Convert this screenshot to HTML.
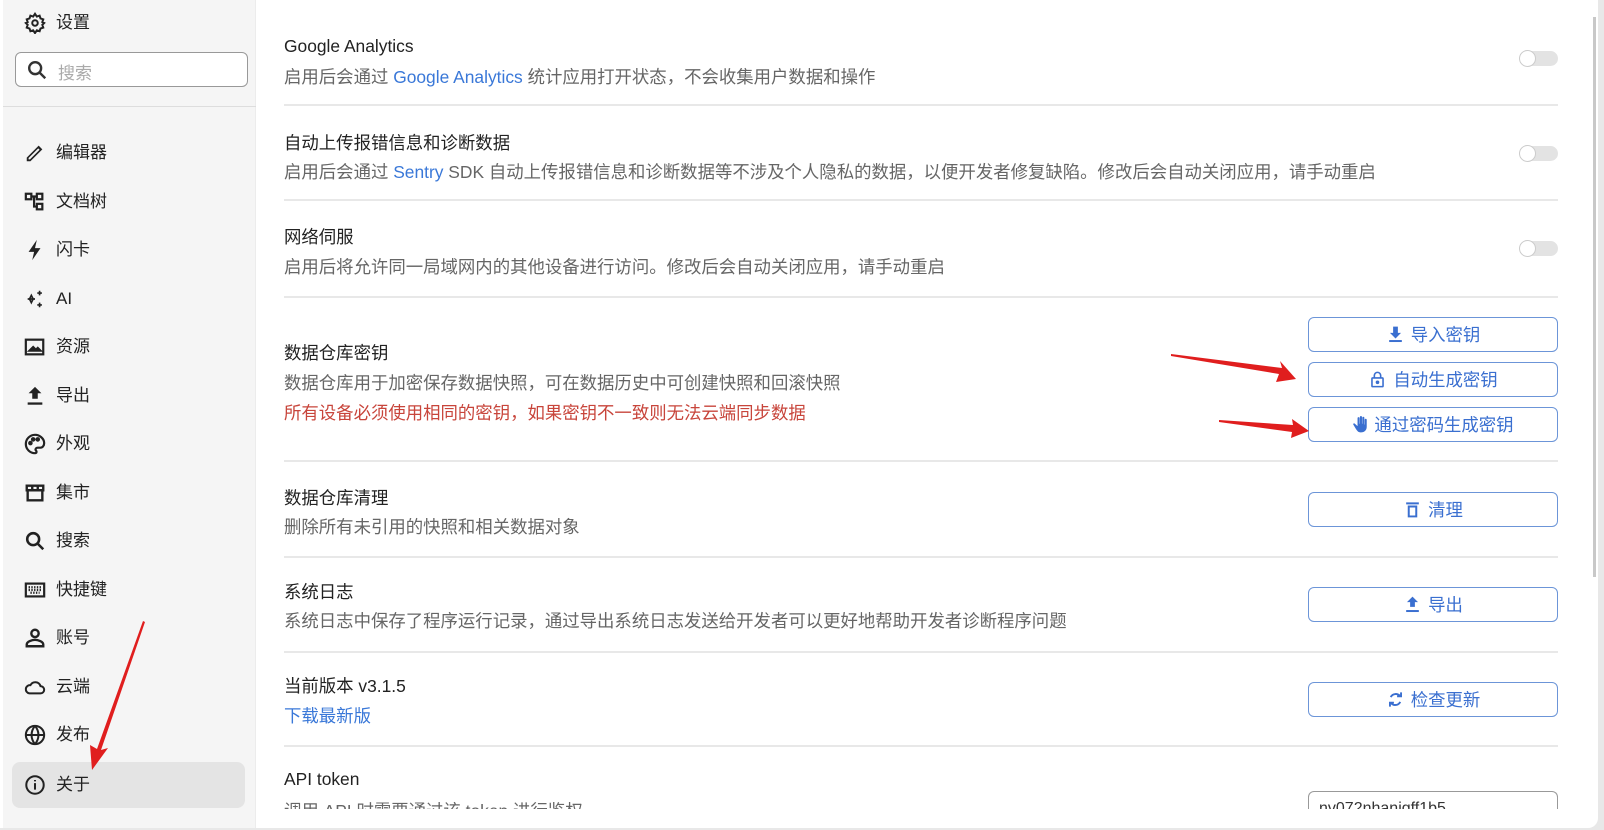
<!DOCTYPE html>
<html><head><meta charset="utf-8"><style>
*{box-sizing:border-box;margin:0;padding:0}
body{width:1604px;height:830px;background:#e8e8e8;font-family:"Liberation Sans","Noto Sans CJK SC",sans-serif;position:relative;overflow:hidden}
.win{position:absolute;left:0;top:0;width:1598px;height:828px;background:#fff;border-radius:0 0 10px 0;overflow:hidden}
.side{position:absolute;left:3px;top:0;width:253px;height:828px;background:#f5f5f5;border-right:1px solid #ececec}
.it{position:absolute;left:20px;font-size:17px;color:#222;height:24px;line-height:24px}
.it svg{position:absolute;left:1px;top:1px;width:22px;height:22px}
.it span{position:absolute;left:33px;white-space:nowrap}
.search{position:absolute;left:12px;top:52px;width:233px;height:35px;border:1px solid #999;border-radius:6px;background:#fff}
.t{position:absolute;left:284px;font-size:17.4px;color:#222;white-space:nowrap}
.d{position:absolute;left:284px;font-size:17.4px;color:#666;white-space:nowrap}
.sep{position:absolute;left:284px;width:1274px;height:2px;background:#e8e8e8}
.tg{position:absolute;left:1519px;width:40px;height:17px}
.tg .tr{position:absolute;left:6px;top:1px;width:33px;height:15px;border-radius:8px;background:#e3e3e3}
.tg .kn{position:absolute;left:0;top:0;width:17px;height:17px;border-radius:50%;background:#fff;border:1px solid #ccc}
.btn{position:absolute;left:1308px;width:250px;height:35px;border:1px solid #6c95d8;border-radius:6px;color:#3a6fd0;font-size:17.4px;display:flex;align-items:center;justify-content:center;gap:6px;background:#fff}
.btn svg{width:19px;height:19px}
a{color:#3a78d8;text-decoration:none}
</style></head><body>
<div class="win">
<div class="side">
<div class="it" style="top:11px"><svg viewBox="0 0 24 24" fill="none" stroke="#222" stroke-width="2.2"><circle cx="12" cy="12" r="3"/><path d="M12 2l2 3 3-1 1 3 3 1-1 3 2 1-2 2 1 3-3 1-1 3-3-1-2 3-2-3-3 1-1-3-3-1 1-3-2-2 2-1-1-3 3-1 1-3 3 1z"/></svg><span>设置</span></div>
<div class="search"><svg style="position:absolute;left:10px;top:6px" width="22" height="22" viewBox="0 0 24 24" fill="none" stroke="#333" stroke-width="2.6"><circle cx="10" cy="10" r="6.5"/><path d="M15 15l6 6"/></svg><span style="position:absolute;left:42px;top:6px;font-size:17px;color:#aaa">搜索</span></div>
<div style="position:absolute;left:0;top:106px;width:253px;height:1px;background:#ddd"></div>
<div class="it" style="top:141px"><svg viewBox="0 0 24 24" fill="#222"><path d="M3 21v-4L16 4l4 4L7 21zM5 19h1.5L17 8.5 15.5 7 5 17.5z"/></svg><span>编辑器</span></div>
<div class="it" style="top:190px"><svg viewBox="0 0 24 24" fill="none" stroke="#222" stroke-width="2.4"><rect x="2" y="3" width="6" height="6"/><rect x="14" y="3" width="6" height="6"/><rect x="14" y="14" width="6" height="6"/><path d="M8 6h6M11 6v11h3"/></svg><span>文档树</span></div>
<div class="it" style="top:238px"><svg viewBox="0 0 24 24" fill="#222"><path d="M14 1L5 14h6l-2 9 9-13h-6z"/></svg><span>闪卡</span></div>
<div class="it" style="top:287px"><svg viewBox="0 0 24 24" fill="none" stroke="#222" stroke-width="1.8"><path d="M8 8l2 4-2 4-2-4zM4 12h8"/><path d="M17 3v5M14.5 5.5h5M17 16v5M14.5 18.5h5" /></svg><span>AI</span></div>
<div class="it" style="top:335px"><svg viewBox="0 0 24 24" fill="none" stroke="#222" stroke-width="2.4"><rect x="2" y="4" width="19" height="16"/><path d="M6 16l4-4 3 3 2-2 3 3z" fill="#222"/></svg><span>资源</span></div>
<div class="it" style="top:384px"><svg viewBox="0 0 24 24" fill="#222"><path d="M12 2l7 7h-4v6H9V9H5z"/><rect x="4" y="19" width="16" height="2.5"/></svg><span>导出</span></div>
<div class="it" style="top:432px"><svg viewBox="0 0 24 24" fill="none" stroke="#222" stroke-width="2.4"><path d="M12 2a10 10 0 100 20c2 0 2-2 1-3s0-3 2-3h3c2 0 4-2 4-5C22 6 17 2 12 2z"/><circle cx="7" cy="11" r="1.3" fill="#222"/><circle cx="10" cy="7" r="1.3" fill="#222"/><circle cx="15" cy="7" r="1.3" fill="#222"/></svg><span>外观</span></div>
<div class="it" style="top:481px"><svg viewBox="0 0 24 24" fill="none" stroke="#222" stroke-width="2.6"><path d="M3 4h18v5H3zM4 9v11h16V9M9 4v5M15 4v5"/></svg><span>集市</span></div>
<div class="it" style="top:529px"><svg viewBox="0 0 24 24" fill="none" stroke="#222" stroke-width="2.8"><circle cx="10" cy="10" r="6.5"/><path d="M15 15l6 6"/></svg><span>搜索</span></div>
<div class="it" style="top:578px"><svg viewBox="0 0 24 24" fill="none" stroke="#222" stroke-width="2.4"><rect x="2" y="5" width="20" height="14"/><path d="M5 9h14M5 12h14M7 15h10" stroke-dasharray="1.5 1.5"/></svg><span>快捷键</span></div>
<div class="it" style="top:626px"><svg viewBox="0 0 24 24" fill="none" stroke="#222" stroke-width="2.6"><circle cx="12" cy="7" r="4"/><path d="M3 21v-2c0-3 6-5 9-5s9 2 9 5v2z"/></svg><span>账号</span></div>
<div class="it" style="top:675px"><svg viewBox="0 0 24 24" fill="none" stroke="#222" stroke-width="2.2"><path d="M6 19h12a4 4 0 000-8 6 6 0 00-11-1 4.5 4.5 0 00-1 9z"/></svg><span>云端</span></div>
<div class="it" style="top:723px"><svg viewBox="0 0 24 24" fill="none" stroke="#222" stroke-width="2.2"><circle cx="12" cy="12" r="10"/><path d="M2 12h20M12 2c-5 6-5 14 0 20M12 2c5 6 5 14 0 20"/></svg><span>发布</span></div>
<div style="position:absolute;left:9px;top:762px;width:233px;height:46px;background:#e4e4e4;border-radius:8px"></div>
<div class="it" style="top:773px"><svg viewBox="0 0 24 24" fill="none" stroke="#222" stroke-width="2.2"><circle cx="12" cy="12" r="9.5"/><path d="M12 10v7M12 6.5v1.5"/></svg><span>关于</span></div>
</div>

<div class="t" style="top:36px">Google Analytics</div>
<div class="d" style="top:64px">启用后会通过 <a>Google Analytics</a> 统计应用打开状态，不会收集用户数据和操作</div>
<div class="tg" style="top:50px"><div class="tr"></div><div class="kn"></div></div>
<div class="sep" style="top:104px"></div>

<div class="t" style="top:130px">自动上传报错信息和诊断数据</div>
<div class="d" style="top:159px">启用后会通过 <a>Sentry</a> SDK 自动上传报错信息和诊断数据等不涉及个人隐私的数据，以便开发者修复缺陷。修改后会自动关闭应用，请手动重启</div>
<div class="tg" style="top:145px"><div class="tr"></div><div class="kn"></div></div>
<div class="sep" style="top:199px"></div>

<div class="t" style="top:224px">网络伺服</div>
<div class="d" style="top:254px">启用后将允许同一局域网内的其他设备进行访问。修改后会自动关闭应用，请手动重启</div>
<div class="tg" style="top:240px"><div class="tr"></div><div class="kn"></div></div>
<div class="sep" style="top:296px"></div>

<div class="t" style="top:340px">数据仓库密钥</div>
<div class="d" style="top:370px">数据仓库用于加密保存数据快照，可在数据历史中可创建快照和回滚快照</div>
<div class="d" style="top:400px;color:#c8453b">所有设备必须使用相同的密钥，如果密钥不一致则无法云端同步数据</div>
<div class="btn" style="top:317px"><svg viewBox="0 0 24 24" fill="#3a6fd0"><path d="M9 2h6v8h4l-7 7-7-7h4z"/><rect x="4" y="19" width="16" height="2.5"/></svg>导入密钥</div>
<div class="btn" style="top:362px"><svg viewBox="0 0 24 24" fill="none" stroke="#3a6fd0" stroke-width="2"><rect x="5" y="10" width="14" height="11" rx="1"/><path d="M8 10V7a4 4 0 018 0v3"/><circle cx="12" cy="15.5" r="1.3" fill="#3a6fd0"/></svg>自动生成密钥</div>
<div class="btn" style="top:407px;gap:3px"><svg viewBox="0 0 24 24" fill="#3a6fd0"><path d="M7 4a1.3 1.3 0 012.6 0v7h.4V2.5a1.3 1.3 0 012.6 0V11h.4V3.5a1.3 1.3 0 012.6 0V12h.4V6a1.3 1.3 0 012.6 0v9c0 4-3 7-7 7s-5-2-7-5l-3-5c-.6-1 .8-2 1.7-1.2L7 14z"/></svg>通过密码生成密钥</div>
<div class="sep" style="top:460px"></div>

<div class="t" style="top:485px">数据仓库清理</div>
<div class="d" style="top:514px">删除所有未引用的快照和相关数据对象</div>
<div class="btn" style="top:492px"><svg viewBox="0 0 24 24" fill="#3a6fd0"><path d="M4 3h16v2.5H4zM6 7h12v15H6zm2.5 2.5v10h7v-10z"/></svg>清理</div>
<div class="sep" style="top:556px"></div>

<div class="t" style="top:579px">系统日志</div>
<div class="d" style="top:608px">系统日志中保存了程序运行记录，通过导出系统日志发送给开发者可以更好地帮助开发者诊断程序问题</div>
<div class="btn" style="top:587px"><svg viewBox="0 0 24 24" fill="#3a6fd0"><path d="M12 2l7 7h-4v6H9V9H5z"/><rect x="4" y="19" width="16" height="2.5"/></svg>导出</div>
<div class="sep" style="top:651px"></div>

<div class="t" style="top:673px">当前版本 v3.1.5</div>
<div class="d" style="top:703px"><a>下载最新版</a></div>
<div class="btn" style="top:682px"><svg viewBox="0 0 24 24" fill="none" stroke="#3a6fd0" stroke-width="2.4"><path d="M18 8a7 7 0 00-12 1M6 16a7 7 0 0012-1"/><path d="M19 3v5h-5M5 21v-5h5" /></svg>检查更新</div>
<div class="sep" style="top:745px"></div>

<div class="t" style="top:769px">API token</div>
<div class="d" style="top:798px;height:11px;overflow:hidden">调用 API 时需要通过该 token 进行鉴权</div>
<div style="position:absolute;left:1308px;top:791px;width:250px;height:18px;border:1px solid #999;border-bottom:none;border-radius:6px 6px 0 0;overflow:hidden"><span style="position:absolute;left:10px;top:8px;font-size:16px;color:#333">nv072nhanigff1b5</span></div>

<div style="position:absolute;left:1593px;top:17px;width:3px;height:560px;background:#c8c8c8"></div>

<svg style="position:absolute;left:0;top:0" width="1604" height="830">
<polygon points="1171,354 1282,368 1280,361 1296,379 1276,382 1279,374 1171,356" fill="#e01e1e"/>
<polygon points="1219,420 1293,425 1292,419 1309,431 1291,438 1292,432 1219,422" fill="#e01e1e"/>
<polygon points="143,621 145,622 101,750 108,748 92,770 90,745 97,749" fill="#e01e1e"/>
</svg>
</div>
</body></html>
